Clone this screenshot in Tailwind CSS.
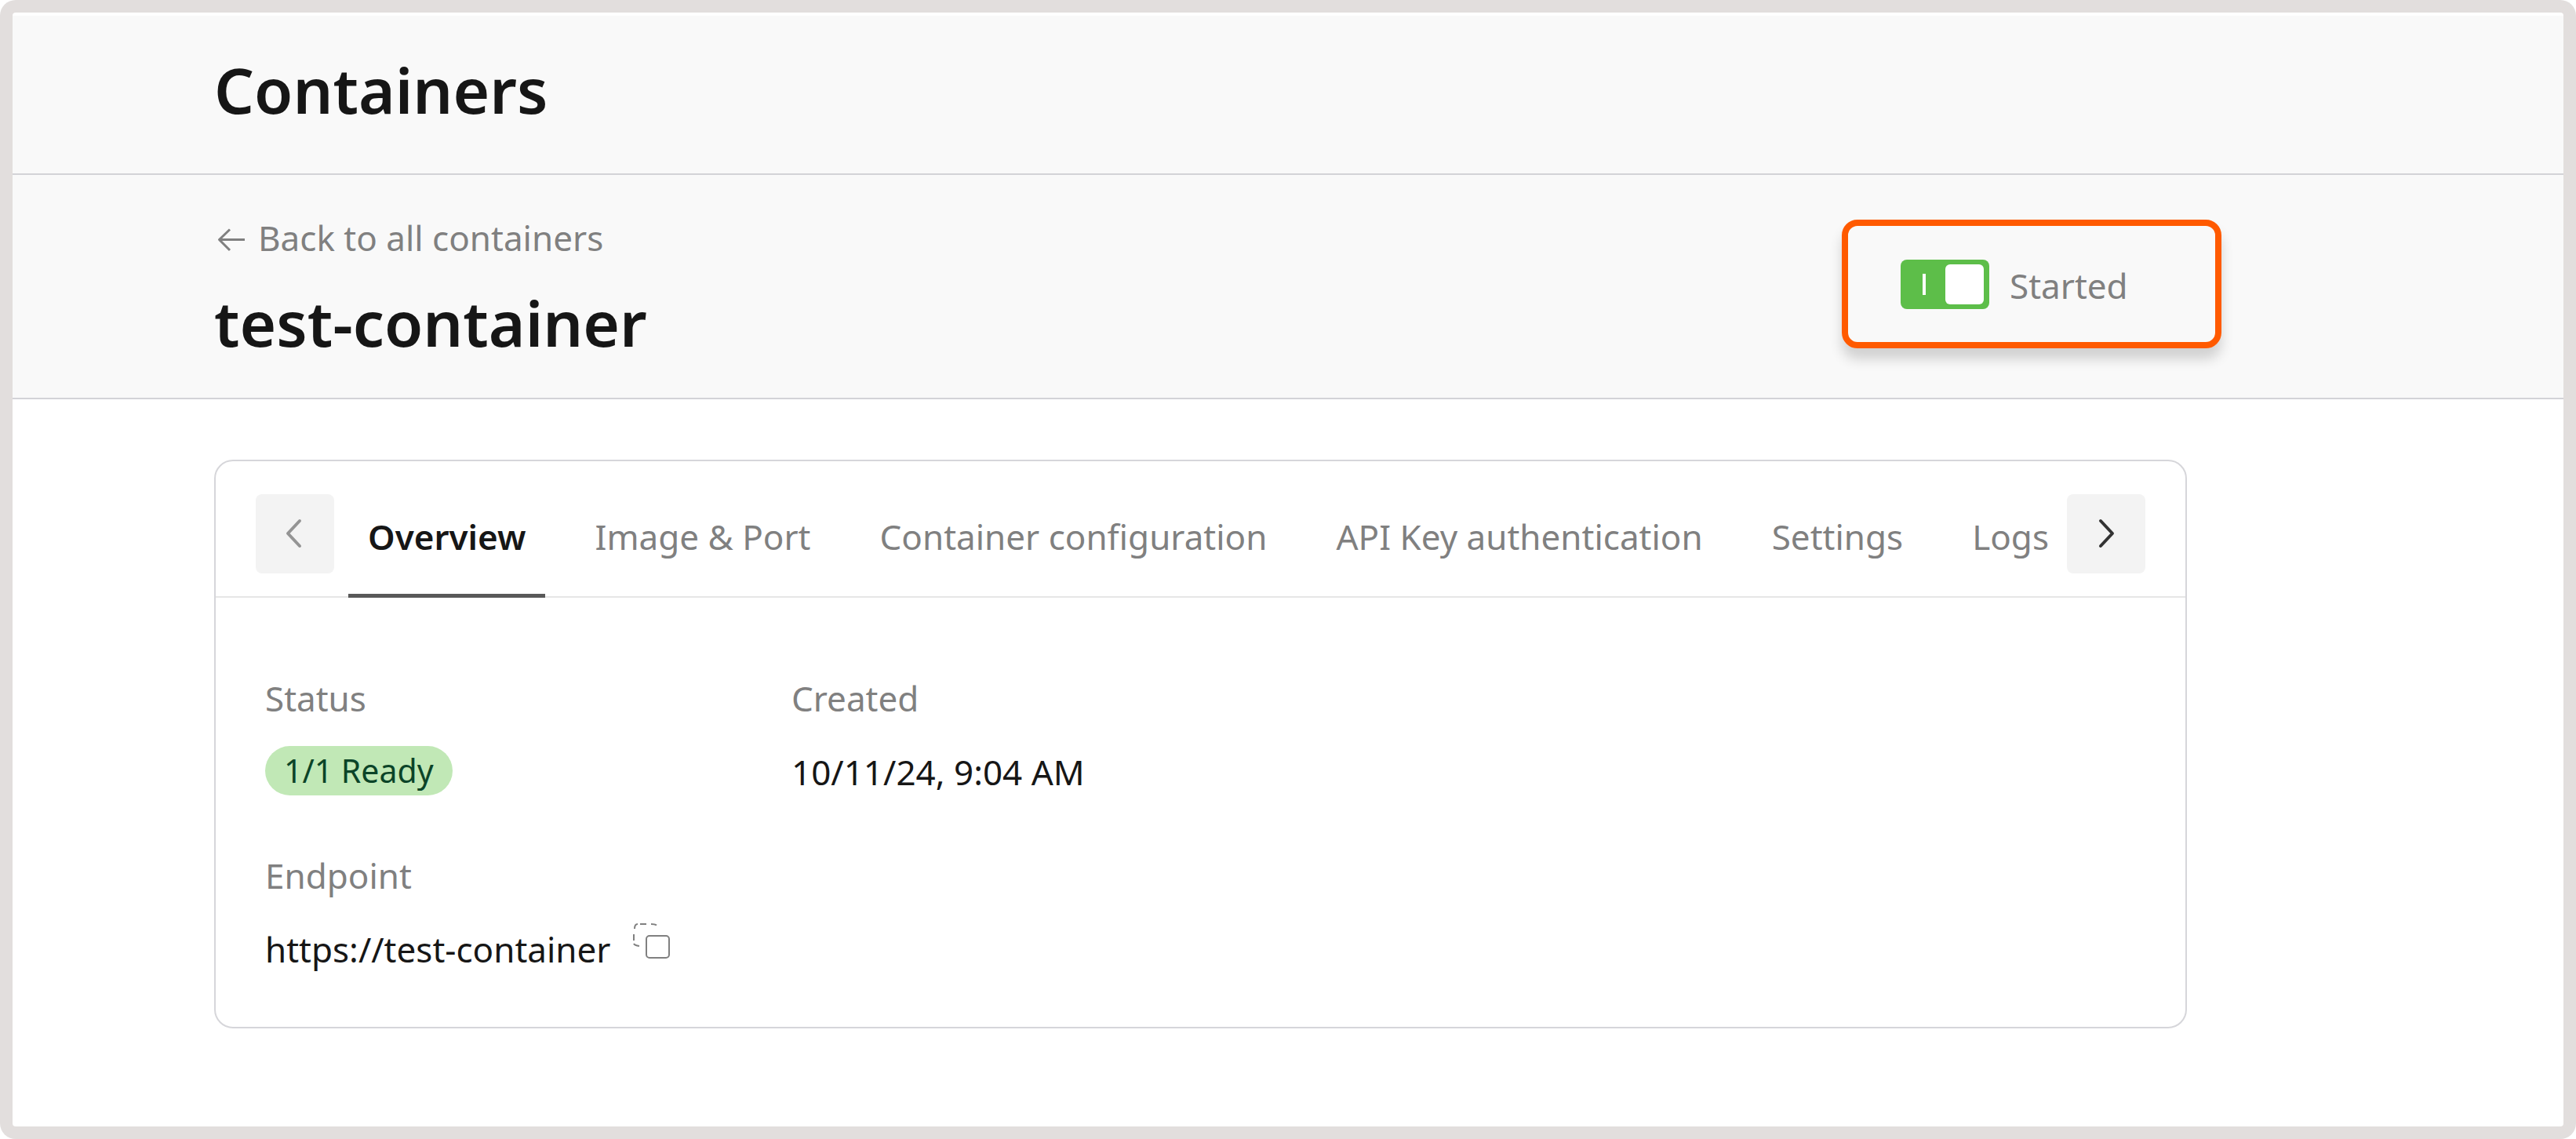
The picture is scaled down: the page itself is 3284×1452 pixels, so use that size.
<!DOCTYPE html>
<html lang="en">
<head>
<meta charset="utf-8">
<meta name="viewport" content="width=device-width, initial-scale=1">
<title>Containers</title>
<script src="https://cdn.jsdelivr.net/npm/@tailwindcss/browser@4"></script>
</head>
<body class="bg-white font-['Noto_Sans',sans-serif] text-[44px] leading-[64px] text-[#161616]">
<div class="min-h-screen rounded-[20px] bg-[#e2dedd] p-4">
  <div class="flex min-h-[calc(100vh-32px)] flex-col rounded bg-white pt-1">
    <header class="border-b-2 border-[#d3d3d7] bg-[#f9f9f9] pt-[38px] pr-[480px] pb-[51px] pl-[257px]">
      <h1 class="text-[80px] leading-[112px] font-semibold">Containers</h1>
    </header>

    <section class="flex items-start justify-between border-b-2 border-[#d3d3d7] bg-[#f9f9f9] pt-12 pr-[436px] pb-10 pl-[257px]">
      <div class="flex flex-col gap-5">
        <a href="#" class="flex items-center gap-4 text-[#808080]">
          <svg class="size-10" viewBox="0 0 40 40" fill="none" stroke="currentColor" stroke-width="3" stroke-linejoin="round" aria-hidden="true"><path d="M39 22.500H6M20 9.500 6.500 22.500 20 36"/></svg>
          Back to all containers
        </a>
        <h2 class="text-[80px] leading-[112px] font-semibold">test-container</h2>
      </div>
      <label class="mt-[9px] flex h-[164px] w-[484px] items-center gap-[26px] rounded-[20px] border-8 border-[#ff5a00] pl-[67px] text-[#808080] shadow-[0_14px_16px_rgba(0,0,0,0.16)]">
        <span class="relative flex">
          <input type="checkbox" role="switch" checked class="h-[63px] w-[113px] appearance-none rounded-lg bg-[#5dbe49]">
          <span class="pointer-events-none absolute top-[18px] left-7 h-[27px] w-1 bg-white"></span>
          <span class="pointer-events-none absolute top-[6px] right-[7px] h-[51px] w-[49px] rounded-md bg-white"></span>
        </span>
        <span class="pt-1">Started</span>
      </label>
    </section>

    <main class="pt-[77px] pr-[480px] pb-[100px] pl-[257px]">
      <div class="rounded-[24px] border-2 border-[#d6d6da]">
        <div class="flex items-start justify-between border-b-2 border-[#e6e6e6] px-[51px]">
          <button type="button" aria-label="Previous tabs" class="mt-[42px] flex h-[101px] w-[100px] shrink-0 items-center justify-center rounded-lg bg-[#f3f3f3] text-[#949494]">
            <svg class="h-10 w-6" viewBox="0 0 24 40" fill="none" stroke="currentColor" stroke-width="4" stroke-linecap="round" stroke-linejoin="round" aria-hidden="true"><path d="M18 3 3 19l15 16"/></svg>
          </button>
          <div role="tablist" class="-mr-0.5 -mb-0.5 flex grow justify-between pl-[18px] text-[#808080]">
            <button type="button" role="tab" aria-selected="true" class="border-b-[5px] border-[#595959] px-[25px] pt-16 pb-[41px] font-semibold text-[#161616]">Overview</button>
            <button type="button" role="tab" aria-selected="false" class="border-b-[5px] border-transparent px-[25px] pt-16 pb-[41px]">Image &amp; Port</button>
            <button type="button" role="tab" aria-selected="false" class="border-b-[5px] border-transparent px-[25px] pt-16 pb-[41px]">Container configuration</button>
            <button type="button" role="tab" aria-selected="false" class="border-b-[5px] border-transparent px-[25px] pt-16 pb-[41px]">API Key authentication</button>
            <button type="button" role="tab" aria-selected="false" class="border-b-[5px] border-transparent px-[25px] pt-16 pb-[41px]">Settings</button>
            <button type="button" role="tab" aria-selected="false" class="border-b-[5px] border-transparent px-[25px] pt-16 pb-[41px]">Logs</button>
          </div>
          <button type="button" aria-label="Next tabs" class="mt-[42px] flex h-[101px] w-[100px] shrink-0 items-center justify-center rounded-lg bg-[#f3f3f3] text-[#333333]">
            <svg class="h-10 w-6" viewBox="0 0 24 40" fill="none" stroke="currentColor" stroke-width="4" stroke-linecap="round" stroke-linejoin="round" aria-hidden="true"><path d="m5 3 15 16L5 35"/></svg>
          </button>
        </div>

        <dl class="grid grid-cols-[671px_1fr] gap-y-[66px] px-[63px] pt-24 pb-[65px]">
          <div>
            <dt class="text-[#808080]">Status</dt>
            <dd class="mt-[29px] flex h-[67px] items-start"><span class="rounded-full bg-[#c1e8b6] px-6 text-[41px] leading-[63px] text-[#0b4428]">1/1 Ready</span></dd>
          </div>
          <div>
            <dt class="text-[#808080]">Created</dt>
            <dd class="mt-[29px] leading-[67px]">10/11/24, 9:04 AM</dd>
          </div>
          <div>
            <dt class="text-[#808080]">Endpoint</dt>
            <dd class="mt-[29px] flex items-start gap-7 leading-[67px]">
              https://test-container
              <button type="button" aria-label="Copy endpoint">
                <svg class="size-12" viewBox="0 0 48 48" fill="none" stroke="#808080" stroke-width="2" aria-hidden="true"><rect x="18" y="16" width="29" height="28" rx="4"/><path d="M3 7c0-4 1-6 4-6M10 1h8M24 1c3 0 5 0 7 1.500M2 14v8M2 26c1 2 3 2.500 7 3"/></svg>
              </button>
            </dd>
          </div>
        </dl>
      </div>
    </main>
  </div>
</div>
</body>
</html>
